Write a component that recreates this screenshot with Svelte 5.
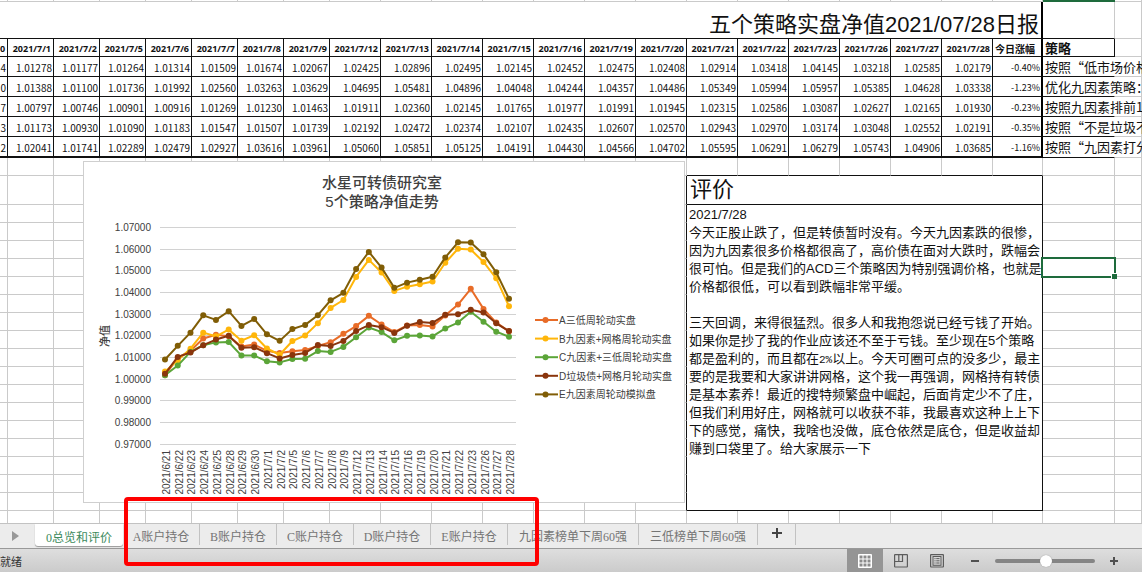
<script>
    const dates = [
        '2021/7/1', '2021/7/2', '2021/7/5', '2021/7/6', '2021/7/7', '2021/7/8', '2021/7/9',
        '2021/7/12', '2021/7/13', '2021/7/14', '2021/7/15', '2021/7/16', '2021/7/19', '2021/7/20',
        '2021/7/21', '2021/7/22', '2021/7/23', '2021/7/26', '2021/7/27', '2021/7/28'
    ];

    const juneDates = [
        '2021/6/21', '2021/6/22', '2021/6/23', '2021/6/24',
        '2021/6/25', '2021/6/28', '2021/6/29', '2021/6/30'
    ];

    const strategies = [
        {
            name: 'A三低周轮动实盘',
            color: '#e86c28',
            cut: '4',
            june: [1.0015, 1.0095, 1.0128, 1.0185, 1.0202, 1.0195, 1.0148, 1.0157],
            values: [1.01278, 1.01177, 1.01264, 1.01314, 1.01509, 1.01674, 1.02067, 1.02425, 1.02896, 1.02495, 1.02145, 1.02452, 1.02475, 1.02408, 1.02914, 1.03418, 1.04145, 1.03218, 1.02585, 1.02179],
            change: '-0.40%',
            note: '按照“低市场价格'
        },
        {
            name: 'B九因素+网格周轮动实盘',
            color: '#ffb60a',
            cut: '0',
            june: [1.0032, 1.0085, 1.0138, 1.0212, 1.0195, 1.0226, 1.0175, 1.02],
            values: [1.01388, 1.011, 1.01736, 1.01992, 1.0256, 1.03263, 1.03629, 1.04695, 1.05481, 1.04896, 1.04048, 1.04244, 1.04357, 1.04486, 1.05349, 1.05994, 1.05957, 1.05385, 1.04628, 1.03338],
            change: '-1.23%',
            note: '优化九因素策略：'
        },
        {
            name: 'C九因素+三低周轮动实盘',
            color: '#5ba538',
            cut: '7',
            june: [1.0015, 1.006, 1.0123, 1.0154, 1.0167, 1.0169, 1.0106, 1.0106],
            values: [1.00797, 1.00746, 1.00901, 1.00916, 1.01269, 1.0123, 1.01463, 1.01911, 1.0236, 1.02145, 1.01765, 1.01977, 1.01991, 1.01945, 1.02315, 1.02586, 1.03087, 1.02627, 1.02165, 1.0193],
            change: '-0.23%',
            note: '按照九因素排前10'
        },
        {
            name: 'D垃圾债+网格月轮动实盘',
            color: '#8a350c',
            cut: '3',
            june: [1.0022, 1.01, 1.012, 1.0154, 1.018, 1.0198, 1.0142, 1.0145],
            values: [1.01173, 1.0093, 1.0109, 1.01183, 1.01547, 1.01507, 1.01739, 1.02192, 1.02472, 1.02374, 1.02107, 1.02435, 1.02607, 1.0257, 1.02943, 1.0297, 1.03174, 1.03048, 1.02552, 1.02191],
            change: '-0.35%',
            note: '按照“不是垃圾不'
        },
        {
            name: 'E九因素周轮动模拟盘',
            color: '#805d06',
            cut: '2',
            june: [1.0088, 1.0151, 1.0212, 1.0292, 1.0271, 1.0311, 1.0243, 1.0275],
            values: [1.02041, 1.01741, 1.02289, 1.02479, 1.02927, 1.03616, 1.03961, 1.0506, 1.05851, 1.05125, 1.04191, 1.0443, 1.04566, 1.04702, 1.05595, 1.06291, 1.06279, 1.05743, 1.04906, 1.03685],
            change: '-1.16%',
            note: '按照“九因素打分'
        }
    ];

    const review = [
        '2021/7/28',
        '今天正股止跌了，但是转债暂时没有。今天九因素跌的很惨，',
        '因为九因素很多价格都很高了，高价债在面对大跌时，跌幅会',
        '很可怕。但是我们的ACD三个策略因为特别强调价格，也就是',
        '价格都很低，可以看到跌幅非常平缓。',
        '',
        '三天回调，来得很猛烈。很多人和我抱怨说已经亏钱了开始。',
        '如果你是抄了我的作业应该还不至于亏钱。至少现在5个策略',
        '都是盈利的，而且都在2%以上。今天可圈可点的没多少，最主',
        '要的是我要和大家讲讲网格，这个我一再强调，网格持有转债',
        '是基本素养！最近的搜特频繁盘中崛起，后面肯定少不了庄，',
        '但我们利用好庄，网格就可以收获不菲，我最喜欢这种上上下',
        '下的感觉，痛快，我啥也没做，底仓依然是底仓，但是收益却',
        '赚到口袋里了。给大家展示一下'
    ].join('\n');
    const [before, after] = review.split('2%');

    const sheets = ['0总览和评价', 'A账户持仓', 'B账户持仓', 'C账户持仓', 'D账户持仓', 'E账户持仓', '九因素榜单下周60强', '三低榜单下周60强'];
    let active = $state(0);
    let zoom = $state(51);

    const allDates = [...juneDates, ...dates];
    const ticks = [1.07, 1.06, 1.05, 1.04, 1.03, 1.02, 1.01, 1.0, 0.99, 0.98, 0.97];
    const px = (i) => 82 + i * 12.74;
    const py = (v) => 66 + (1.07 - v) * 2165;
    const points = (s) => [...s.june, ...s.values].map((v, i) => ({ x: px(i), y: py(v) }));
    const cells = (n) => Array(n).fill(0);
</script>

<div class="app" lang="zh-CN">
    <main class="sheet">
        <table>
            <colgroup>
                <col class="c-cut" />
                {#each dates as d}
                    <col class={d.length > 8 ? 'c-wide' : 'c-day'} />
                {/each}
                <col class="c-change" />
                <col class="c-note" />
                <col />
            </colgroup>
            <tbody>
                <tr class="sliver">
                    {#each cells(24) as _, i}<td class:green={i === 22}></td>{/each}
                </tr>
                <tr class="title-row">
                    <td class="title ink thick-r" colspan="22">五个策略实盘净值2021/07/28日报</td>
                    <td class="ink-b"></td>
                    <td></td>
                </tr>
                <tr class="head">
                    <th class="ink">0</th>
                    {#each dates as d}<th class="ink">{d}</th>{/each}
                    <th class="ink thick-r today">今日涨幅</th>
                    <th class="ink note">策略</th>
                    <td></td>
                </tr>
                {#each strategies as s, r}
                    <tr class="data" class:last={r === 4}>
                        <td class="ink">{s.cut}</td>
                        {#each s.values as v}<td class="ink">{v.toFixed(5)}</td>{/each}
                        <td class="ink thick-r change">{s.change}</td>
                        <td class="ink-b note open">{s.note}</td>
                        <td></td>
                    </tr>
                {/each}
                <tr>
                    {#each cells(24) as _, i}<td class:ink-b={i > 14 && i < 22}></td>{/each}
                </tr>
                <tr class="review-head">
                    {#each cells(15) as _, i}<td class:ink-r={i === 14}></td>{/each}
                    <td class="ink" colspan="7">评价</td>
                    <td></td>
                    <td></td>
                </tr>
                {#each cells(17) as _, r}
                    <tr>
                        {#each cells(15) as _, i}<td class:ink-r={i === 14}></td>{/each}
                        {#if r === 0}
                            <td class="ink review" colspan="7" rowspan="17">{before}<span class="half">2%</span>{after}</td>
                        {/if}
                        <td class:selected={r === 3}></td>
                        <td></td>
                    </tr>
                {/each}
                <tr class="tail">
                    {#each cells(24) as _}<td></td>{/each}
                </tr>
            </tbody>
        </table>

        <svg class="chart" viewBox="0 0 602 342" width="602" height="342" role="img" aria-label="5个策略净值走势">
            <rect x="0.5" y="0.5" width="601" height="341" fill="#fff" stroke="#cfcfcf" />
            <text class="chart-title" x="299" y="27">水星可转债研究室</text>
            <text class="chart-title" x="299" y="46">5个策略净值走势</text>
            {#each ticks as t}
                <line x1="77" x2="433" y1={Math.round(py(t)) + 0.5} y2={Math.round(py(t)) + 0.5} stroke="#d2d2d2" />
                <text class="axis" x="68" y={Math.round(py(t)) + 4} text-anchor="end">{t.toFixed(5)}</text>
            {/each}
            {#each allDates as d, i}
                <text class="axis" text-anchor="end" transform="translate({px(i) + 5} 289) rotate(-90)">{d}</text>
            {/each}
            <text class="axis-name" text-anchor="middle" transform="translate(26 175) rotate(-90)">净值</text>
            {#each strategies as s}
                <polyline points={points(s).map((p) => `${p.x},${p.y}`).join(' ')} fill="none" stroke={s.color} stroke-width="2" stroke-linejoin="round" />
                {#each points(s) as p}
                    <circle cx={p.x} cy={p.y} r="3" fill={s.color} />
                {/each}
            {/each}
            {#each strategies as s, i}
                <line x1="452" x2="475" y1={159 + i * 18.6} y2={159 + i * 18.6} stroke={s.color} stroke-width="2" />
                <circle cx="462.5" cy={159 + i * 18.6} r="3" fill={s.color} />
                <text class="legend" x="476" y={163 + i * 18.6}>{s.name}</text>
            {/each}
        </svg>
    </main>

    <nav class="tabs">
        <button class="next" aria-label="下一张">
            <svg width="8" height="12" viewBox="0 0 8 12"><path d="M0 1 L7 6 L0 11 Z" fill="#989898" /></svg>
        </button>
        {#each sheets as name, i}
            <button class="tab" class:long={name.length > 5} class:active={active === i} onclick={() => (active = i)}>{name}</button>
        {/each}
        <button class="add" aria-label="新建工作表">
            <svg width="12" height="12" viewBox="0 0 12 12"><path d="M6 1 V11 M1 6 H11" stroke="#444" stroke-width="2" /></svg>
        </button>
    </nav>

    <footer class="status">
        <span class="ready">就绪</span>
        <button class="view on" aria-label="普通">
            <svg width="14" height="14" viewBox="0 0 14 14">
                <rect x="0" y="0" width="14" height="14" rx="1" fill="#fff" />
                <path d="M1.5 1.5h3v3h-3z M5.5 1.5h3v3h-3z M9.5 1.5h3v3h-3z M1.5 5.5h3v3h-3z M5.5 5.5h3v3h-3z M9.5 5.5h3v3h-3z M1.5 9.5h3v3h-3z M5.5 9.5h3v3h-3z M9.5 9.5h3v3h-3z" fill="#8b8b8b" />
            </svg>
        </button>
        <button class="view" aria-label="页面布局">
            <svg width="14" height="14" viewBox="0 0 14 14" fill="none" stroke="#5c5c5c">
                <rect x="0.6" y="0.6" width="12.8" height="12.4" rx="0.5" stroke-width="1.2" />
                <path d="M1 7.5 H8.5 V1 M4.8 1 V7.5" stroke-width="1.2" />
            </svg>
        </button>
        <button class="view" aria-label="分页预览">
            <svg width="14" height="14" viewBox="0 0 14 14" fill="none" stroke="#5c5c5c">
                <rect x="0.6" y="0.6" width="12.8" height="12.4" rx="0.5" stroke-width="1.2" />
                <rect x="3" y="2.5" width="8" height="8.8" />
                <path d="M4.5 4.6h1 M6.3 4.6H9.5 M4.5 6.8h1 M6.3 6.8H9.5 M4.5 9h1 M6.3 9H9.5" />
            </svg>
        </button>
        <button class="step minus" aria-label="缩小">
            <svg width="10" height="10" viewBox="0 0 10 10"><path d="M1 5 H9" stroke="#505050" stroke-width="2" /></svg>
        </button>
        <input type="range" min="0" max="100" bind:value={zoom} aria-label="缩放" />
        <button class="step plus" aria-label="放大">
            <svg width="10" height="10" viewBox="0 0 10 10"><path d="M1 5 H9 M5 1 V9" stroke="#505050" stroke-width="2" /></svg>
        </button>
    </footer>

    <div class="marker"></div>
</div>

<style>
    :global(body) {
        margin: 0;
    }

    .app {
        position: relative;
        display: flex;
        flex-direction: column;
        min-height: 100vh;
        overflow: hidden;
        background: #fff;
        color: #111;
        font-family: "Liberation Sans", "Noto Sans CJK SC", sans-serif;
    }

    .sheet {
        position: relative;
        flex: 1;
        overflow: hidden;
    }

    table {
        width: 100%;
        table-layout: fixed;
        border-collapse: separate;
        border-spacing: 0;
    }

    .c-cut { width: 8px; }
    .c-day { width: 46px; }
    .c-wide { width: 51px; }
    .c-change { width: 50px; }
    .c-note { width: 72px; }

    tr {
        height: 18px;
    }

    td, th {
        box-sizing: border-box;
        padding: 0;
        border-right: 1px solid #cacaca;
        border-bottom: 1px solid #cacaca;
        white-space: nowrap;
        line-height: 16px;
    }

    .ink {
        border-color: #111;
    }

    .ink-b {
        border-bottom-color: #111;
    }

    .ink-r {
        border-right-color: #111;
    }

    .thick-r {
        border-right: 2px solid #000;
    }

    .sliver {
        height: 2px;
    }

    .sliver td {
        height: 2px;
    }

    .green {
        background: #1e6b3c;
        border-color: #1e6b3c;
    }

    .title-row {
        height: 37px;
    }

    .title {
        padding: 10px 2px 0 0;
        text-align: right;
        font-size: 22px;
        line-height: 26px;
    }

    .head th {
        padding: 3px 2px 0 0;
        text-align: right;
        font-family: "Open Sans", "Noto Sans CJK SC", sans-serif;
        font-size: 9px;
        line-height: 14px;
    }

    .data {
        height: 20px;
    }

    .data td {
        padding: 3px 1px 0 0;
        text-align: right;
        font-family: "Noto Sans CJK SC", sans-serif;
        font-size: 10px;
    }

    .last {
        height: 21px;
    }

    .last .ink {
        border-bottom-width: 2px;
    }

    .head .today {
        padding-left: 2px;
        text-align: left;
        font-size: 10px;
    }

    .data .change {
        font-size: 9px;
    }

    .head .note, .data .note {
        padding: 0 0 0 2px;
        text-align: left;
        font-family: "Noto Sans CJK SC", sans-serif;
        font-size: 13px;
    }

    .open {
        border-right-color: transparent;
    }

    .review-head {
        height: 29px;
    }

    .review-head .ink {
        padding-left: 3px;
        font-size: 22px;
        line-height: 28px;
    }

    .review {
        padding: 1px 0 0 2px;
        vertical-align: top;
        white-space: pre;
        font-size: 13px;
        line-height: 18px;
    }

    /* half-width digits, so the line stays inside the cell */
    .half {
        font-family: "Liberation Mono", monospace;
        font-size: 11px;
        line-height: 1;
    }

    .selected {
        position: relative;
    }

    .selected::before {
        content: '';
        position: absolute;
        inset: -2px -2px -2px -2px;
        border: 2px solid #1e6b3c;
    }

    .selected::after {
        content: '';
        position: absolute;
        right: -3px;
        bottom: -3px;
        width: 5px;
        height: 5px;
        border: 1px solid #fff;
        border-width: 1px 0 0 1px;
        background: #1e6b3c;
    }

    .tail, .tail td {
        height: 12px;
        border-bottom: none;
    }

    .chart {
        position: absolute;
        left: 83px;
        top: 161px;
    }

    .chart text {
        fill: #404040;
    }

    .chart-title {
        font-size: 15px;
        font-weight: 500;
        text-anchor: middle;
    }

    .axis, .legend {
        font-size: 10px;
    }

    .axis-name {
        font-size: 11px;
        font-weight: 500;
    }

    button {
        padding: 0;
        border: none;
        background: none;
        color: inherit;
        font-family: inherit;
    }

    .tabs {
        display: flex;
        align-items: flex-start;
        height: 25px;
        border-top: 1px solid #c2c2c2;
        box-sizing: border-box;
        background: #ececec;
    }

    .next {
        width: 35px;
        height: 24px;
        padding-left: 12px;
        text-align: left;
        line-height: 24px;
    }

    .next svg {
        vertical-align: middle;
    }

    .tab {
        box-sizing: border-box;
        height: 21px;
        min-width: 77px;
        padding: 5px 9px 0;
        border-right: 1px solid #c2c2c2;
        color: #747474;
        font-family: "Liberation Serif", "Noto Sans CJK SC", serif;
        font-size: 12px;
        line-height: 16px;
        white-space: nowrap;
    }

    .long {
        padding: 5px 11px 0;
    }

    .active {
        height: 22px;
        border-right: none;
        border-radius: 0 0 3px 3px;
        background: #fff;
        box-shadow: 0 1px 1px #999;
        color: #3c8a5c;
    }

    .add {
        width: 38px;
        height: 21px;
        border-right: 1px solid #c2c2c2;
    }

    .status {
        display: flex;
        align-items: center;
        height: 24px;
        border-top: 1px solid #999;
        box-sizing: border-box;
        background: linear-gradient(#dedede, #cbcbcb);
    }

    .ready {
        flex: 1;
        color: #333;
        font-size: 11px;
    }

    .view {
        display: flex;
        align-items: center;
        justify-content: center;
        width: 36px;
        height: 23px;
    }

    .view.on {
        background: #959595;
    }

    .step {
        display: flex;
        align-items: center;
        justify-content: center;
        width: 20px;
        height: 23px;
    }

    .minus {
        margin: 0 10px;
    }

    .plus {
        margin: 0 18px 0 9px;
    }

    input {
        width: 100px;
        height: 12px;
        margin: 0;
        appearance: none;
        background: none;
    }

    input::-webkit-slider-runnable-track {
        height: 4px;
        border-radius: 2px;
        background: #858585;
    }

    input::-webkit-slider-thumb {
        appearance: none;
        width: 12px;
        height: 12px;
        margin-top: -4px;
        border-radius: 50%;
        background: #fff;
        box-shadow: 0 0 1px #777;
    }

    .marker {
        position: absolute;
        left: 124px;
        bottom: 6px;
        box-sizing: border-box;
        width: 415px;
        height: 69px;
        border: 4px solid #f00;
        border-radius: 4px;
        pointer-events: none;
    }
</style>
